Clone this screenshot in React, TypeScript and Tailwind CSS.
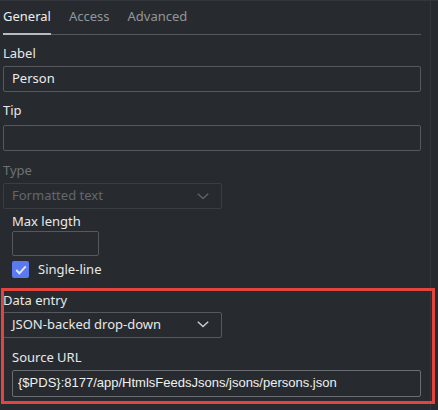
import type { ReactNode } from "react";

const ui = { fontFamily: '"Noto Sans", "Open Sans", sans-serif' };

function Chevron({ muted = false }: { muted?: boolean }) {
  return (
    <svg width="12" height="7" viewBox="0 0 12 7" fill="none" className="shrink-0">
      <polyline
        points="0.8,0.8 6,5.6 11.2,0.8"
        stroke={muted ? "#5d6165" : "#c9ccd0"}
        strokeWidth="1.5"
      />
    </svg>
  );
}

function FieldLabel({ children, muted = false }: { children: ReactNode; muted?: boolean }) {
  return (
    <div className={`text-[13px] leading-[18px] ${muted ? "text-[#6e7276]" : "text-[#e8e8e8]"}`}>
      {children}
    </div>
  );
}

function Select({ value, disabled = false }: { value: string; disabled?: boolean }) {
  return (
    <div
      className={`flex h-[26px] w-[219px] items-center justify-between rounded-[2px] border pl-[8px] pr-[12px] text-[13px] ${
        disabled ? "border-[#3a3e42] text-[#63676b]" : "border-[#55595d] text-[#e8e8e8]"
      }`}
    >
      <span>{value}</span>
      <Chevron muted={disabled} />
    </div>
  );
}

export default function App() {
  return (
    <div className="flex h-[410px] w-[438px] overflow-hidden border-t border-[#33373b] bg-[#272b2f]" style={ui}>
      <div className="w-[431px] shrink-0 border-r border-[#34383c] pl-[3px]">
        {/* tab strip */}
        <div className="flex h-[34px] w-[418px] items-end gap-[18px] border-b border-[#55595d] text-[13px]">
          <div className="-mb-px border-b-2 border-[#b9bcbf] pb-[7px] text-[#ececec]">General</div>
          <div className="pb-[8px] text-[#92969a]">Access</div>
          <div className="pb-[8px] text-[#92969a]">Advanced</div>
        </div>

        <div className="mt-[9px]">
          <FieldLabel>Label</FieldLabel>
          <div className="mt-[4px] flex h-[26px] w-[418px] items-center rounded-[2px] border border-[#55595d] pl-[8px] text-[13px] text-[#ececec]">
            Person
          </div>
        </div>

        <div className="mt-[9px]">
          <FieldLabel>Tip</FieldLabel>
          <div className="mt-[6px] h-[26px] w-[418px] rounded-[2px] border border-[#55595d]" />
        </div>

        <div className="mt-[10px]">
          <FieldLabel muted>Type</FieldLabel>
          <div className="mt-[4px]">
            <Select value="Formatted text" disabled />
          </div>
        </div>

        <div className="mt-[3px] pl-[9px]">
          <FieldLabel>Max length</FieldLabel>
          <div className="mt-[1px] h-[25px] w-[87px] rounded-[2px] border border-[#55595d]" />
          <label className="mt-[4px] flex items-center gap-[9px] text-[13px] text-[#e8e8e8]">
            <span className="flex h-[17px] w-[17px] items-center justify-center rounded-[2px] bg-[#5b7af0]">
              <svg width="12" height="10" viewBox="0 0 12 10" fill="none">
                <polyline points="1.2,5 4.4,8.2 10.8,1.4" stroke="#dfe3ee" strokeWidth="2" />
              </svg>
            </span>
            Single-line
          </label>
        </div>

        {/* data entry section, outlined */}
        <div className="relative mt-[11px]">
          <div className="pointer-events-none absolute -top-[3px] -left-[2px] h-[116px] w-[434px] border-[3px] border-[#e2453f]" />
          <FieldLabel>Data entry</FieldLabel>
          <div className="mt-[3px]">
            <Select value="JSON-backed drop-down" />
          </div>
          <div className="mt-[10px] pl-[9px]">
            <FieldLabel>Source URL</FieldLabel>
            <div
              className="mt-[4px] flex h-[27px] w-[409px] items-center rounded-[2px] border border-[#6a6e72] pl-[5px] text-[13px] text-[#f0f0f0]"
              style={{ fontFamily: '"Liberation Sans", Arial, sans-serif' }}
            >
              {"{$PDS}:8177/app/HtmlsFeedsJsons/jsons/persons.json"}
            </div>
          </div>
        </div>

        <div className="mt-[9px]">
          <FieldLabel>Dropdown label path</FieldLabel>
        </div>
      </div>
    </div>
  );
}
